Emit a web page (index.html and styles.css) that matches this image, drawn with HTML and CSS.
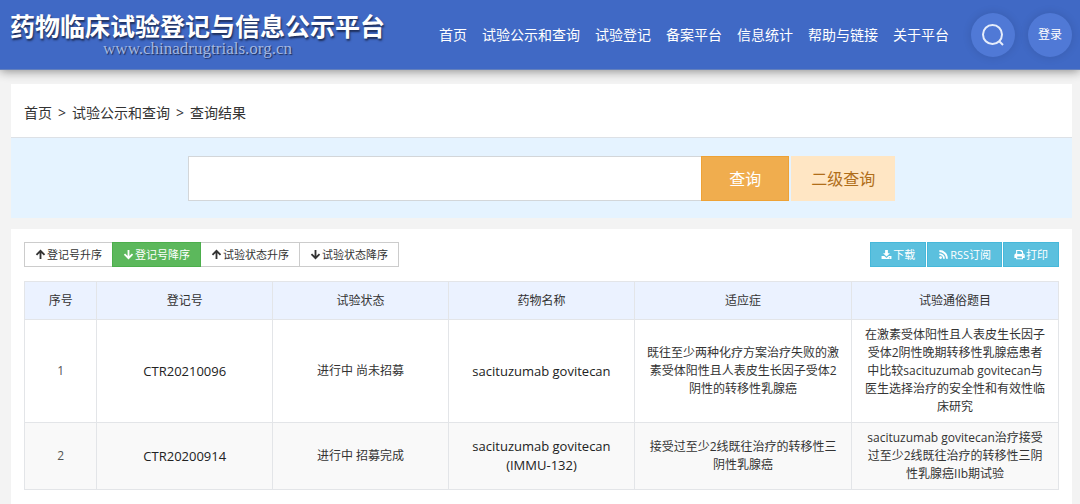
FILE: index.html
```html
<!DOCTYPE html>
<html lang="zh-CN">
<head>
<meta charset="utf-8">
<title>药物临床试验登记与信息公示平台</title>
<link rel="stylesheet" href="styles.css">
</head>
<body>
<header class="header">
  <div class="brand">
    <h1 class="brand-name">药物临床试验登记与信息公示平台</h1>
    <div class="brand-url">www.chinadrugtrials.org.cn</div>
  </div>
  <nav class="nav">
    <a href="#">首页</a>
    <a href="#">试验公示和查询</a>
    <a href="#">试验登记</a>
    <a href="#">备案平台</a>
    <a href="#">信息统计</a>
    <a href="#">帮助与链接</a>
    <a href="#">关于平台</a>
  </nav>
  <div class="actions">
    <button class="round" type="button" aria-label="搜索">
      <svg class="search-icon" viewBox="0 0 22 22"><circle cx="10.5" cy="10.5" r="9.5"/><path d="M17 17l4 4"/></svg>
    </button>
    <button class="round" type="button">登录</button>
  </div>
</header>
<main class="main">
  <section class="panel">
    <nav class="crumbs"><a href="#">首页</a><span>&gt;</span><a href="#">试验公示和查询</a><span>&gt;</span><a href="#">查询结果</a></nav>
    <form class="search">
      <div class="search-group">
        <input class="search-input" type="text" aria-label="查询">
        <button class="btn-query" type="button">查询</button>
        <button class="btn-second" type="button">二级查询</button>
      </div>
    </form>
  </section>
  <section class="panel results">
    <div class="toolbar">
      <div class="sorts">
        <button type="button"><svg viewBox="0 0 12 12"><path d="M6 11V3M1.600 6.400L6 2l4.400 4.400"/></svg>登记号升序</button>
        <button type="button" class="active"><svg viewBox="0 0 12 12"><path d="M6 1v8M1.600 5.600L6 10l4.400-4.400"/></svg>登记号降序</button>
        <button type="button"><svg viewBox="0 0 12 12"><path d="M6 11V3M1.600 6.400L6 2l4.400 4.400"/></svg>试验状态升序</button>
        <button type="button"><svg viewBox="0 0 12 12"><path d="M6 1v8M1.600 5.600L6 10l4.400-4.400"/></svg>试验状态降序</button>
      </div>
      <div class="exports">
        <button type="button"><svg class="solid" viewBox="0 0 12 12"><path d="M4.500 1h3v3.500h2.300L6 8.300 2.200 4.500h2.300z"/><path fill-rule="evenodd" d="M.6 7.500h3L6 9.700l2.400-2.200h3v3.500H.6zM8.600 9.300h1.200v.8H8.600z"/></svg>下载</button>
        <button type="button"><svg viewBox="0 0 12 12"><circle class="dot" cx="2.800" cy="9.400" r="1.500"/><path d="M1.500 5.500a5 5 0 0 1 5 5M1.500 2.200a8.300 8.300 0 0 1 8.300 8.300"/></svg>RSS订阅</button>
        <button type="button"><svg class="solid" viewBox="0 0 12 12"><path fill-rule="evenodd" d="M2.300 1h6l1.500 1.500V5h.6L11.700 6.300v3.400H9.800V11.300H2.300V9.700H.4V6.300L1.700 5h.6zM3.500 2.100v3.300h5.100V3.400H7.300V2.100zM3.500 8.200v2h5.100v-2zM9.600 6.300v.9h.9v-.9z"/></svg>打印</button>
      </div>
    </div>
    <table class="table">
      <colgroup><col class="c-no"><col class="c-id"><col class="c-state"><col class="c-drug"><col class="c-use"><col class="c-title"></colgroup>
      <thead>
        <tr><th>序号</th><th>登记号</th><th>试验状态</th><th>药物名称</th><th>适应症</th><th>试验通俗题目</th></tr>
      </thead>
      <tbody>
        <tr>
          <td class="no">1</td>
          <td><a href="#">CTR20210096</a></td>
          <td>进行中 尚未招募</td>
          <td><a href="#">sacituzumab govitecan</a></td>
          <td>既往至少两种化疗方案治疗失败的激素受体阳性且人表皮生长因子受体2阴性的转移性乳腺癌</td>
          <td>在激素受体阳性且人表皮生长因子受体2阴性晚期转移性乳腺癌患者中比较sacituzumab govitecan与医生选择治疗的安全性和有效性临床研究</td>
        </tr>
        <tr>
          <td class="no">2</td>
          <td><a href="#">CTR20200914</a></td>
          <td>进行中 招募完成</td>
          <td><a href="#">sacituzumab govitecan (IMMU-132)</a></td>
          <td>接受过至少2线既往治疗的转移性三阴性乳腺癌</td>
          <td>sacituzumab govitecan治疗接受过至少2线既往治疗的转移性三阴性乳腺癌IIb期试验</td>
        </tr>
      </tbody>
    </table>
  </section>
</main>
</body>
</html>
```
FILE: styles.css
```css
* { box-sizing: border-box; }

body {
  margin: 0;
  background: #f3f3f3;
  color: #333;
  font: 14px/20px "Open Sans", "Noto Sans CJK SC", sans-serif;
}

a { color: inherit; text-decoration: none; }
button, input { font: inherit; margin: 0; border-radius: 0; }
button { cursor: pointer; white-space: nowrap; }

.header {
  display: flex;
  align-items: center;
  padding: 0 8px 0 10px;
  height: 70px;
  background: #4069c5;
  border-bottom: 1px solid #6380bd;
  box-shadow: 0 1px 10px rgba(0, 0, 0, .45);
  color: #fff;
}

.brand { display: flex; flex-direction: column; align-items: center; padding-bottom: 2px; }

.brand-name {
  margin: 0;
  font-size: 25px;
  line-height: 30px;
  font-weight: 700;
  white-space: nowrap;
  text-shadow: 1px 2px 2px rgba(20, 30, 60, .8);
}

.brand-url {
  font: 17px/16px "Liberation Serif", serif;
  color: #a3b7e2;
  text-shadow: 1px 1px 1px rgba(20, 30, 60, .8);
}

.nav { display: flex; gap: 15px; margin-left: auto; white-space: nowrap; }

.actions { display: flex; gap: 13px; margin-left: 22px; }

.round {
  display: flex;
  align-items: center;
  justify-content: center;
  width: 44px;
  height: 44px;
  padding: 0;
  border: 0;
  border-radius: 50%;
  background: #5079d6;
  box-shadow: 0 0 10px rgba(0, 0, 0, .12);
  color: #fff;
  font-size: 12px;
}

.search-icon { width: 22px; height: 22px; fill: none; stroke: #e6edfb; stroke-width: 2; }

.main { display: flex; flex-direction: column; gap: 11px; padding: 14px 8px 0 11px; }

.panel { background: #fff; }

.crumbs {
  display: flex;
  gap: 6px;
  padding: 19px 13px 14px;
  border-bottom: 1px solid #dde1e6;
}

.search { display: flex; justify-content: center; padding: 18px 0 17px; background: #e5f3ff; }

.search-group { display: flex; width: calc(100% * 2 / 3); height: 45px; font-size: 16px; }

.search-input { flex: 1; min-width: 0; padding: 0 12px; border: 1px solid #d3d6d9; border-right: 0; background: #fff; }

.btn-query { width: 88px; padding: 0; border: 1px solid #eea236; background: #f0ad4e; color: #fff; }

.btn-second { width: 104px; margin-left: 2px; padding: 0; border: 0; background: #ffe6c4; color: #b06e1a; }

.results { padding: 13px 13px 16px; }

.toolbar { display: flex; justify-content: space-between; margin-bottom: 14px; font-size: 11px; line-height: 16px; }

.sorts, .exports { display: flex; }
.exports { gap: 1px; }

.toolbar button {
  display: flex;
  align-items: center;
  gap: 1px;
  height: 25px;
  padding: 0 10px;
  border: 1px solid #ccc;
  background: #fff;
  color: #333;
}

.sorts button + button { margin-left: -1px; }

.toolbar .active { background: #5cb85c; border-color: #4cae4c; color: #fff; z-index: 1; }

.exports button { border-color: #46b8da; background: #5bc0de; color: #fff; }

.toolbar svg { width: 11px; height: 11px; fill: none; stroke: currentColor; stroke-width: 2; }
.toolbar .solid, .toolbar .dot { fill: currentColor; stroke: none; }

.table {
  width: 100%;
  border-collapse: collapse;
  table-layout: fixed;
  font-size: 12px;
  line-height: 18px;
  text-align: center;
}

.c-no { width: 7%; }
.c-id, .c-state { width: 17%; }
.c-drug { width: 18%; }
.c-use { width: 21%; }
.c-title { width: 20%; }

.table th, .table td { border: 1px solid #e3e5e8; vertical-align: middle; }
.table th { padding: 10px 12px 9px; background: #ebf2ff; font-weight: 400; }
.table td { padding: 6px 12px; }
.table td a { color: #222; font-size: 13px; }
.table tbody tr:nth-child(even) { background: #f9f9f9; }
.table .no { color: #555; }
```
